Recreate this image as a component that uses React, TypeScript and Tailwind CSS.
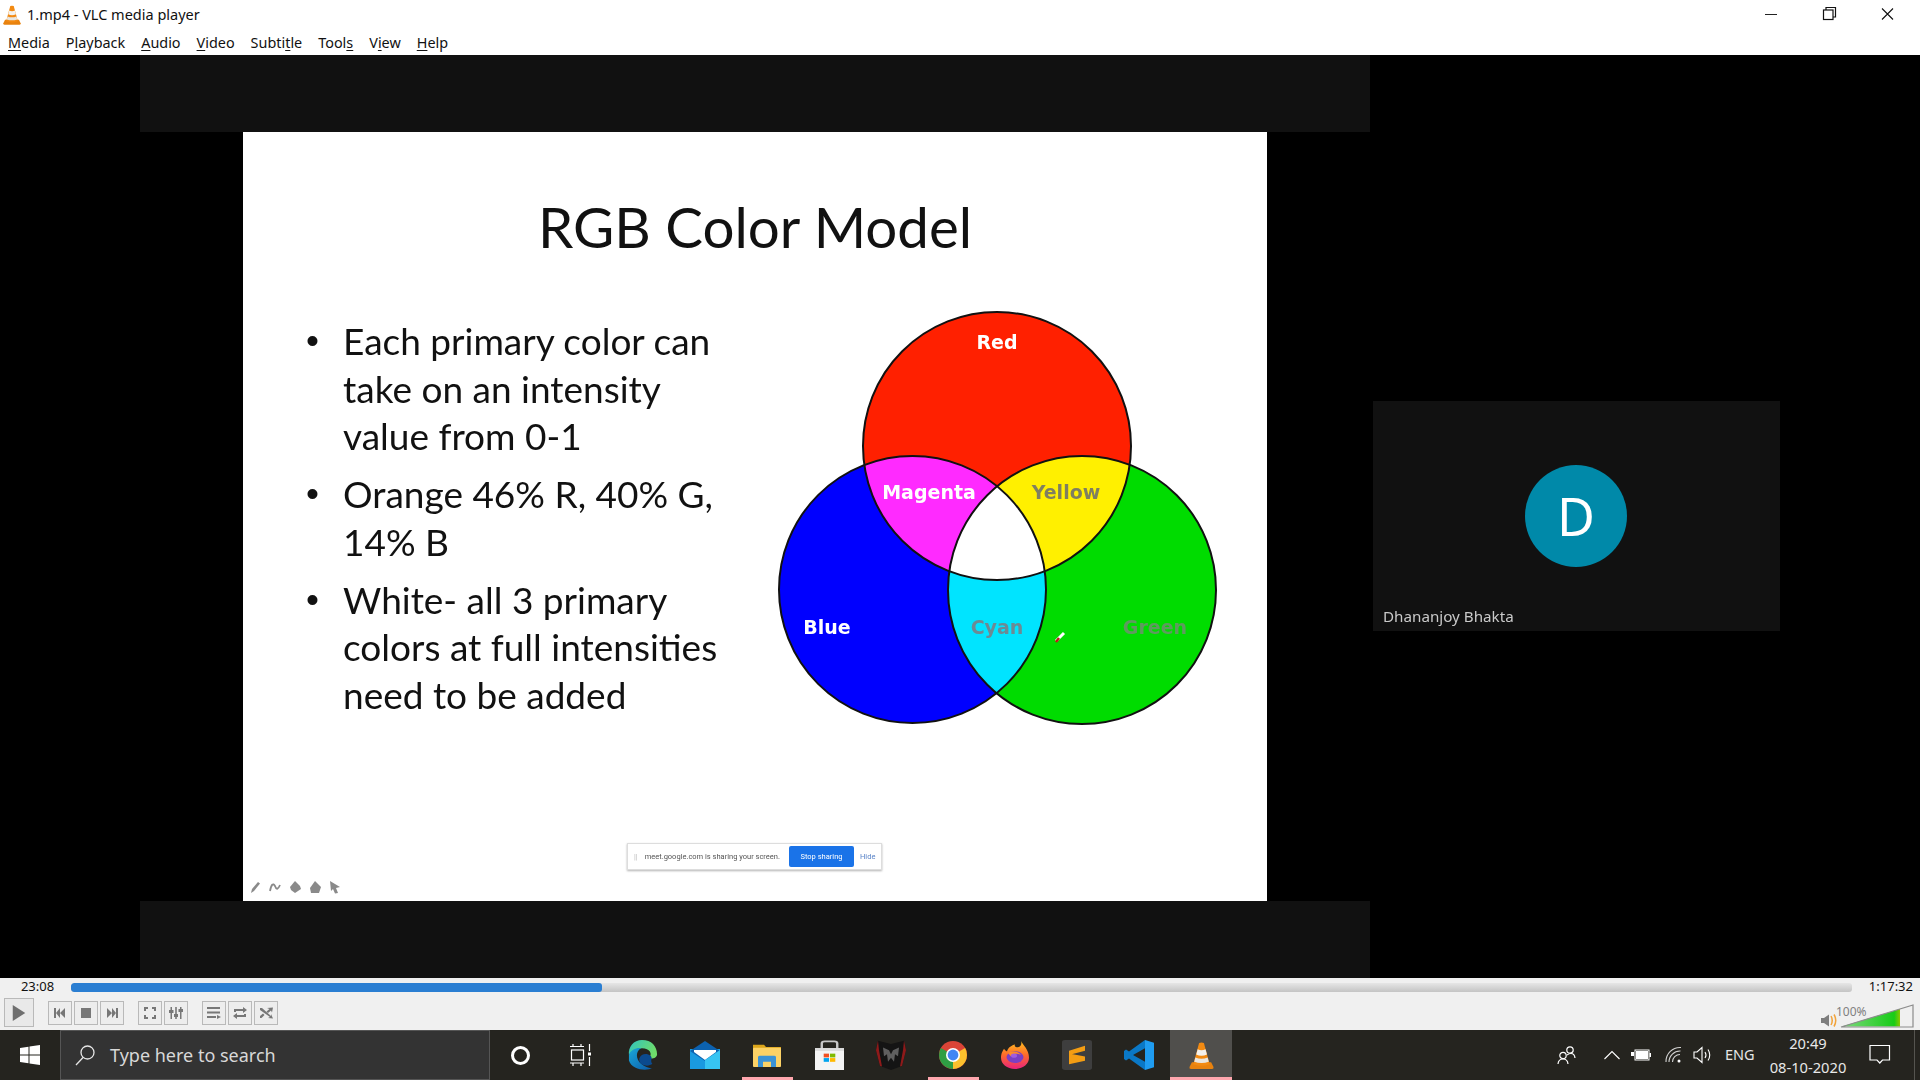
import React from "react";

const Vlc = ({ className }: { className?: string }) => (
  <svg viewBox="0 0 26 28" className={className}>
    <path d="M3 21 L0.5 26 Q0 28 2 28 H24 Q26 28 25.500 26 L23 21 Z" fill="#e8820e" />
    <path d="M10.500 1 Q13 0 15.500 1 L21.500 23 Q13 26.500 4.500 23 Z" fill="#f28a12" />
    <path d="M9 7.500 Q13 9.500 17.200 7.500 L18.700 13 Q13 15.500 7.500 13 Z" fill="#f4f1ec" />
    <path d="M6.600 16 Q13 18.500 19.400 16 L20.600 20.500 Q13 23 5.400 20.500 Z" fill="#e9e6e0" />
  </svg>
);

const Ctl = ({ children, className = "" }: { children: React.ReactNode; className?: string }) => (
  <div className={`w-6 h-6 border border-[#b9b9b9] bg-[#ededed] flex items-center justify-center shrink-0 ${className}`}>
    <svg viewBox="0 0 18 18" className="w-[18px] h-[18px]" fill="#777777" stroke="#777777" strokeWidth="0">
      {children}
    </svg>
  </div>
);

const Menu = ({ pre, u, post }: { pre: string; u: string; post: string }) => (
  <span>
    {pre}
    <span className="underline underline-offset-2">{u}</span>
    {post}
  </span>
);

const TaskBtn = ({ children, mark, active }: { children: React.ReactNode; mark?: boolean; active?: boolean }) => (
  <div className={`relative w-[62px] h-full flex items-center justify-center shrink-0 ${active ? "bg-[#504f4c]" : ""}`}>
    {children}
    {mark && <div className={`absolute bottom-0 h-[3px] bg-[#ffa7ae] ${active ? "left-0 right-0" : "left-[6px] right-[5px]"}`} />}
  </div>
);

const Venn = () => (
  <svg viewBox="775 305 450 425" className="w-[450px] h-[425px] shrink-0">
    <defs>
      <clipPath id="cr"><circle cx="997" cy="446" r="134" /></clipPath>
      <clipPath id="cb"><circle cx="912.500" cy="589.500" r="133.500" /></clipPath>
      <clipPath id="cg"><circle cx="1082" cy="590" r="134" /></clipPath>
    </defs>
    <circle cx="912.500" cy="589.500" r="133.500" fill="#0000ff" />
    <circle cx="1082" cy="590" r="134" fill="#00dc00" />
    <circle cx="997" cy="446" r="134" fill="#ff2000" />
    <g clipPath="url(#cr)"><circle cx="912.500" cy="589.500" r="133.500" fill="#ff2aff" /></g>
    <g clipPath="url(#cr)"><circle cx="1082" cy="590" r="134" fill="#fff000" /></g>
    <g clipPath="url(#cb)"><circle cx="1082" cy="590" r="134" fill="#00e4ff" /></g>
    <g clipPath="url(#cb)"><g clipPath="url(#cr)"><circle cx="1082" cy="590" r="134" fill="#ffffff" /></g></g>
    <g fill="none" stroke="#111111" strokeWidth="2">
      <circle cx="912.500" cy="589.500" r="133.500" />
      <circle cx="1082" cy="590" r="134" />
      <circle cx="997" cy="446" r="134" />
    </g>
    <g fontFamily="'DejaVu Sans', sans-serif" fontWeight="700" fontSize="19" textAnchor="middle">
      <text x="997" y="349" fill="#ffffff">Red</text>
      <text x="929" y="499" fill="#ffffff">Magenta</text>
      <text x="1066" y="499" fill="#7f7f60">Yellow</text>
      <text x="827" y="634" fill="#ffffff">Blue</text>
      <text x="997" y="634" fill="#6d8a94">Cyan</text>
      <text x="1155" y="634" fill="#5f9a5f">Green</text>
    </g>
    <path d="M1056 641 L1064 633" stroke="#ffffff" strokeWidth="3" />
    <path d="M1056 642 L1059 638" stroke="#c01818" strokeWidth="2.500" />
  </svg>
);

const Bullet = ({ lines, mt }: { lines: string[]; mt?: boolean }) => (
  <div className={`flex ${mt ? "mt-[10px]" : ""}`}>
    <span className="w-[37px] shrink-0 [font-family:'Liberation_Sans',sans-serif]">•</span>
    <div>
      {lines.map((l) => (
        <div key={l} className="whitespace-nowrap">{l}</div>
      ))}
    </div>
  </div>
);

export default function App() {
  return (
    <div className="w-[1920px] h-[1080px] flex flex-col overflow-hidden bg-black [font-family:'Open_Sans',sans-serif]">
      {/* title bar */}
      <div className="h-[30px] bg-white flex items-center shrink-0 relative">
        <Vlc className="w-[18px] h-[20px] ml-[3px]" />
        <span className="ml-[6px] text-[14.500px] text-[#111] whitespace-nowrap [font-family:'Noto_Sans',sans-serif]">1.mp4 - VLC media player</span>
        <div className="ml-auto flex items-center">
          <svg viewBox="0 0 58 30" className="w-[58px] h-[30px]"><path d="M22 14.500 H34" stroke="#222" strokeWidth="1" /></svg>
          <svg viewBox="0 0 58 30" className="w-[58px] h-[30px]" fill="none" stroke="#111" strokeWidth="1.200">
            <rect x="22.500" y="10" width="9.500" height="9.500" />
            <path d="M25 10 V7.500 H34.500 V17 H32" />
          </svg>
          <svg viewBox="0 0 58 30" className="w-[58px] h-[30px] mr-[3px]" stroke="#111" strokeWidth="1.100"><path d="M23 8.500 L34 19.500 M34 8.500 L23 19.500" /></svg>
        </div>
      </div>
      {/* menu */}
      <div className="h-[25px] bg-white flex items-center gap-4 pl-2 pt-[1px] text-[14.400px] text-[#111] shrink-0 [font-family:'Noto_Sans',sans-serif]">
        <Menu pre="" u="M" post="edia" />
        <Menu pre="P" u="l" post="ayback" />
        <Menu pre="" u="A" post="udio" />
        <Menu pre="" u="V" post="ideo" />
        <Menu pre="Subti" u="t" post="le" />
        <Menu pre="Tool" u="s" post="" />
        <Menu pre="V" u="i" post="ew" />
        <Menu pre="" u="H" post="elp" />
      </div>
      {/* video */}
      <div className="flex-1 min-h-0 flex bg-black">
        <div className="w-[140px] shrink-0" />
        <div className="w-[1230px] shrink-0 flex flex-col">
          <div className="h-[77px] bg-[#111111] shrink-0" />
          <div className="flex-1 min-h-0 flex justify-center">
            <div className="relative w-[1024px] bg-white flex flex-col text-black [font-family:'Lato',sans-serif]">
              <div className="h-[173px] flex items-center justify-center text-[56.500px] pt-[15px] text-[#111] shrink-0 blur-[0.4px]">RGB Color Model</div>
              <div className="flex">
                <div className="w-[532px] pl-[63px] shrink-0 text-[37px] leading-[47.700px] text-[#111] pt-[12px] blur-[0.4px]">
                  <Bullet lines={["Each primary color can", "take on an intensity", "value from 0-1"]} />
                  <Bullet mt lines={["Orange 46% R, 40% G,", "14% B"]} />
                  <Bullet mt lines={["White- all 3 primary", "colors at full intensities", "need to be added"]} />
                </div>
                <div className="blur-[0.4px] shrink-0"><Venn /></div>
              </div>
              {/* share bar floats over the slide */}
              <div className="absolute left-[384px] top-[711px] w-[255px] h-[27px] bg-white border border-[#dddddd] shadow-[0_1px_2px_rgba(0,0,0,0.3)] flex items-center text-[7.500px] text-[#555] blur-[0.4px] [font-family:'Roboto',sans-serif]">
                <span className="ml-[6px] text-[#bbb]">||</span>
                <span className="ml-[7px] whitespace-nowrap">meet.google.com is sharing your screen.</span>
                <div className="absolute left-[161px] top-[2px] w-[65px] h-[21px] bg-[#1a73e8] rounded-[2px] text-white flex items-center justify-center">Stop sharing</div>
                <span className="absolute left-[232px] text-[#5a84c8]">Hide</span>
              </div>
              {/* presenter toolbar */}
              <svg viewBox="0 0 92 14" className="absolute left-[7px] top-[748px] w-[92px] h-[14px] blur-[0.4px]" fill="#8a8a8a">
                <path d="M1 13 L2 9 L8 2 L10 3.500 L4 11 Z" />
                <path d="M20 11 Q22 1 25 6 Q27 12 30 5" fill="none" stroke="#8a8a8a" strokeWidth="1.800" />
                <path d="M40 7 L45 1 L50 6 L51 9 L45 13 L41 10 Z" />
                <path d="M60 8 L65 1 L71 7 L69 13 H61 Z" />
                <path d="M80 1 L90 7 L86 8 L88 13 L85 13.500 L83 9 L81 11 Z" />
              </svg>
            </div>
          </div>
          <div className="h-[77px] bg-[#111111] shrink-0" />
        </div>
        <div className="flex-1 flex items-center pl-[3px] pb-[1px]">
          <div className="relative w-[407px] h-[230px] bg-[#111111] blur-[0.3px]">
            <div className="absolute left-[152px] top-[64px] w-[102px] h-[102px] rounded-full bg-[#0089a9] flex items-center justify-center text-white text-[52px] [font-family:'Noto_Sans',sans-serif]">D</div>
            <div className="absolute left-[10px] top-[203px] text-[15.200px] leading-[24px] text-[#c9c9c9] whitespace-nowrap [font-family:'Noto_Sans',sans-serif]">Dhananjoy Bhakta</div>
          </div>
        </div>
      </div>
      {/* controls */}
      <div className="h-[52px] bg-[#f0f0f0] shrink-0 flex flex-col">
        <div className="h-[18px] flex items-center">
          <span className="w-[71px] pl-[4px] text-center text-[13px] text-[#111] [font-family:'Noto_Sans',sans-serif]">23:08</span>
          <div className="w-[1781px] h-[9px] rounded-[3px] bg-gradient-to-b from-[#e6e6e6] to-[#c4c4c4] overflow-hidden">
            <div className="w-[531px] h-full rounded-[3px] bg-[#2a7ed2]" />
          </div>
          <span className="ml-auto mr-[7px] text-[13px] text-[#111] [font-family:'Noto_Sans',sans-serif]">1:17:32</span>
        </div>
        <div className="flex-1 flex items-center pl-1 pb-[1px]">
          <div className="w-[30px] h-[29px] border border-[#b9b9b9] bg-[#e9e9e9] flex items-center justify-center shrink-0">
            <svg viewBox="0 0 18 20" className="w-[16px] h-[20px]"><path d="M2 1 L16 10 L2 19 Z" fill="#6f6f6f" /></svg>
          </div>
          <div className="ml-[14px] flex gap-[2px]">
            <Ctl><path d="M3 4 H5 V14 H3 Z M9 4 V14 L5 9 Z M14 4 V14 L9 9 Z" /></Ctl>
            <Ctl><rect x="4" y="4" width="10" height="10" /></Ctl>
            <Ctl><path d="M15 4 H13 V14 H15 Z M9 4 V14 L13 9 Z M4 4 V14 L9 9 Z" /></Ctl>
          </div>
          <div className="ml-[14px] flex gap-[2px]">
            <Ctl><path d="M3 3 H7 V5 H5 V7 H3 Z M11 3 H15 V7 H13 V5 H11 Z M3 11 H5 V13 H7 V15 H3 Z M13 11 H15 V15 H11 V13 H13 Z" /></Ctl>
            <Ctl><path d="M3.500 3 H5 V6 H6.500 V9 H5 V15 H3.500 V9 H2 V6 H3.500 Z M8.200 3 H9.800 V10 H11 V13 H9.800 V15 H8.200 V13 H7 V10 H8.200 Z M13 3 H14.500 V5 H16 V8 H14.500 V15 H13 V8 H11.500 V5 H13 Z" /></Ctl>
          </div>
          <div className="ml-[14px] flex gap-[2px]">
            <Ctl><path d="M2 3 H15 V5 H2 Z M2 7.500 H15 V9.500 H2 Z M2 12 H11 V14 H2 Z M12 11 L16 13 L12 15 Z" /></Ctl>
            <Ctl><path d="M3 8 V5 H12 V3 L16 6 L12 9 V7 H5 V8 Z M15 10 V13 H6 V15 L2 12 L6 9 V11 H13 V10 Z" /></Ctl>
            <Ctl><path d="M3 4 L5 4 L14 12 V10 L16 14.500 L11 14 L13 13 L3 6 Z M10 4 L16 3.500 L15 8.500 L14 6.500 L11 9 L9.500 7.500 L12.500 5 Z M3 12 L6 9.500 L7.500 11 L4.500 14 L3 14 Z" /></Ctl>
          </div>
          <div className="ml-auto relative w-[100px] h-full shrink-0">
            <svg viewBox="0 0 100 33" className="absolute inset-0 w-[100px] h-[33px]">
              <defs>
                <linearGradient id="vol" x1="0" x2="1">
                  <stop offset="0" stopColor="#7fd87f" />
                  <stop offset="0.900" stopColor="#18cc18" />
                  <stop offset="1" stopColor="#8ac800" />
                </linearGradient>
              </defs>
              <path d="M1 22 H4 L9 18.500 V30.500 L4 27 H1 Z" fill="#7d7d7d" />
              <path d="M11 20 Q13.500 24.500 11 29 M14 18.500 Q17.500 24.500 14 30.500" fill="none" stroke="#f2a33a" strokeWidth="1.500" />
              <path d="M21.500 30.500 L80 30.500 L80 13 Z" fill="url(#vol)" />
              <path d="M21 31 L93 9 V31 Z" fill="none" stroke="#8c8c8c" strokeWidth="1.200" />
            </svg>
            <span className="absolute left-[16px] top-[8px] text-[12px] leading-[16px] text-[#808080] [font-family:'Noto_Sans',sans-serif]">100%</span>
          </div>
        </div>
      </div>
      {/* taskbar */}
      <div className="h-[50px] bg-[#25241f] shrink-0 flex items-center text-white">
        <div className="w-[60px] h-full flex items-center justify-center shrink-0">
          <svg viewBox="0 0 20 20" className="w-[20px] h-[20px]" fill="#ffffff">
            <path d="M0 3 L8.500 1.800 V9.500 H0 Z M9.500 1.600 L20 0 V9.500 H9.500 Z M0 10.500 H8.500 V18.200 L0 17 Z M9.500 10.500 H20 V20 L9.500 18.400 Z" />
          </svg>
        </div>
        <div className="w-[430px] h-full bg-[#333333] border-y border-[#555555] border-x flex items-center shrink-0">
          <svg viewBox="0 0 24 24" className="w-[24px] h-[24px] ml-[12px]" fill="none" stroke="#e6e6e6" strokeWidth="1.300">
            <circle cx="14.500" cy="9.500" r="6.500" />
            <path d="M10 14.500 L3 22" />
          </svg>
          <span className="ml-[13px] text-[18px] text-[#d8d8d8] whitespace-nowrap [font-family:'Noto_Sans',sans-serif]">Type here to search</span>
        </div>
        <div className="w-[61px] h-full flex items-center justify-center shrink-0">
          <div className="w-[19px] h-[19px] rounded-full border-[3px] border-white" />
        </div>
        <div className="w-[59px] h-full flex items-center justify-center shrink-0">
          <svg viewBox="0 0 24 24" className="w-[24px] h-[24px]" fill="none" stroke="#ffffff" strokeWidth="1.200">
            <path d="M1 3.500 H15 M4 3.500 V1 M12 3.500 V1" />
            <rect x="2.500" y="7" width="12" height="10" />
            <path d="M1 20 H15 M4 20 V23 M12 20 V23 M20.500 1 V8 M20.500 14 V23" />
            <rect x="19" y="9.500" width="3" height="3" fill="#ffffff" stroke="none" />
          </svg>
        </div>
        <div className="w-[2px] shrink-0" />
        <TaskBtn>
          <svg viewBox="0 0 32 44" preserveAspectRatio="none" className="w-[30px] h-[30px]">
            <defs>
              <linearGradient id="e1" x1="0" y1="0" x2="1" y2="1">
                <stop offset="0" stopColor="#1aa7d8" />
                <stop offset="1" stopColor="#0c5ba8" />
              </linearGradient>
              <linearGradient id="e2" x1="0" y1="0" x2="1" y2="0.400">
                <stop offset="0" stopColor="#2fc4c0" />
                <stop offset="1" stopColor="#6fdc6a" />
              </linearGradient>
            </defs>
            <path d="M15 0 C25 0 31 9 31 21 C31 26 27 28 22 27 C27 20 23 12 15 12 C9 12 4 16 1 22 C0 10 6 0 15 0 Z" fill="url(#e2)" />
            <path d="M1 22 C3 14 9 11 14 12 C8 16 8 28 14 35 C19 41 24 42 26 41 C20 46 4 44 1 30 Z" fill="url(#e1)" />
            <path d="M12 27 C14 20 20 19 24 23 C27 27 23 30 26 35 C22 40 11 38 12 27 Z" fill="#0b4a8e" />
          </svg>
        </TaskBtn>
        <TaskBtn>
          <svg viewBox="0 0 30 28" className="w-[30px] h-[28px]">
            <rect x="0" y="8" width="30" height="20" fill="#1a9ae0" />
            <path d="M0 10 L15 0 L30 10 L15 20 Z" fill="#0c62b0" />
            <path d="M4 9 H26 V11 L15 19 L4 11 Z" fill="#ffffff" />
            <path d="M15 19 L30 9 V28 H15 Z" fill="#37c4f2" />
          </svg>
        </TaskBtn>
        <TaskBtn mark>
          <svg viewBox="0 0 28 31" preserveAspectRatio="none" className="w-[28px] h-[23px]">
            <path d="M0 1 H11 L13 4 H28 V10 H0 Z" fill="#dca51a" />
            <rect x="0" y="5" width="28" height="26" rx="1" fill="#fcd266" />
            <path d="M5 31 V18 Q5 16 7 16 H21 Q23 16 23 18 V31 H18 V24 H10 V31 Z" fill="#3b93d6" />
          </svg>
        </TaskBtn>
        <TaskBtn>
          <svg viewBox="0 0 30 44" preserveAspectRatio="none" className="w-[29px] h-[30px]">
            <path d="M7 13 V5 Q7 2 10 2 H20 Q23 2 23 5 V13" fill="none" stroke="#c8c8c8" strokeWidth="2.500" />
            <path d="M0 12 H30 V44 H0 Z" fill="#f4f4f4" />
            <rect x="0" y="12" width="30" height="4" fill="#dcdcdc" />
            <rect x="9" y="20" width="5.500" height="5.500" fill="#f25022" />
            <rect x="15.500" y="20" width="5.500" height="5.500" fill="#7fba00" />
            <rect x="9" y="26.500" width="5.500" height="5.500" fill="#00a4ef" />
            <rect x="15.500" y="26.500" width="5.500" height="5.500" fill="#ffb900" />
          </svg>
        </TaskBtn>
        <TaskBtn>
          <svg viewBox="0 0 30 44" preserveAspectRatio="none" className="w-[30px] h-[30px]">
            <path d="M2 1 L15 6 L28 1 L30 15 L26 38 L15 44 L4 38 L0 15 Z" fill="#141414" />
            <path d="M2 1 L0 15 L4 38 L6 39 L3 15 Z M28 1 L30 15 L26 38 L24 39 L27 15 Z" fill="#8e1a1a" />
            <path d="M7 11 L13 15 L15 21 L17 15 L23 11 L22 24 L19 21 L18 32 L15 26 L12 32 L11 21 L8 24 Z" fill="#5f5f5f" />
          </svg>
        </TaskBtn>
        <TaskBtn mark>
          <svg viewBox="0 0 28 28" className="w-[28px] h-[28px]">
            <circle cx="14" cy="14" r="14" fill="#db4437" />
            <path d="M14 14 L26.100 7 A14 14 0 0 1 14 28 Z" fill="#fbc02d" />
            <path d="M14 14 L14 28 A14 14 0 0 1 1.900 7 Z" fill="#2f9e44" />
            <circle cx="14" cy="14" r="7" fill="#ffffff" />
            <circle cx="14" cy="14" r="5.400" fill="#4285f4" />
          </svg>
        </TaskBtn>
        <TaskBtn>
          <svg viewBox="0 0 28 40" preserveAspectRatio="none" className="w-[28px] h-[28px]">
            <defs>
              <linearGradient id="ff" x1="0.500" y1="0" x2="0.500" y2="1">
                <stop offset="0" stopColor="#ffc01e" />
                <stop offset="0.500" stopColor="#ff6a2a" />
                <stop offset="1" stopColor="#e8227e" />
              </linearGradient>
            </defs>
            <path d="M20 0 C22 6 28 12 28 24 C28 33 22 40 14 40 C6 40 0 33 0 24 C0 17 2 14 3 11 C4 13 5 14 6 15 C7 9 11 6 14 5 C13 8 15 9 17 9 C20 8 21 4 20 0 Z" fill="url(#ff)" />
            <circle cx="14" cy="23" r="8.500" fill="#7b3fc4" />
            <path d="M7 17 C12 13 18 15 20 20 C16 17 11 18 10 22 Z" fill="#ff8a2a" />
            <circle cx="13" cy="21" r="3" fill="#a05ce0" />
          </svg>
        </TaskBtn>
        <TaskBtn>
          <svg viewBox="0 0 30 42" preserveAspectRatio="none" className="w-[30px] h-[30px]">
            <rect x="0" y="0" width="30" height="42" rx="3" fill="#3e3e3e" />
            <path d="M23 8 V15 L7 21 V15 Z M7 19 L23 23 V29 L7 34 V27 L7 19 Z" fill="#f49d13" />
          </svg>
        </TaskBtn>
        <TaskBtn>
          <svg viewBox="0 0 30 44" preserveAspectRatio="none" className="w-[30px] h-[30px]">
            <path d="M21 0 L30 4 V40 L21 44 L21 0 Z" fill="#1f9cf0" />
            <path d="M21 0 V12 L9 22 L21 32 V44 L5 27 L2 30 L0 28 V16 L2 14 L5 17 Z" fill="#0a78c6" />
          </svg>
        </TaskBtn>
        <TaskBtn mark active>
          <Vlc className="w-[25px] h-[27px]" />
        </TaskBtn>
        {/* tray */}
        <div className="flex-1 h-full flex items-center relative">
          <svg viewBox="0 0 20 20" className="absolute left-[325px] top-[15px] w-[20px] h-[20px]" fill="none" stroke="#ffffff" strokeWidth="1.200">
            <circle cx="13" cy="5" r="3.200" /><circle cx="6" cy="10.500" r="3.200" />
            <path d="M1 19 Q1.500 14 6 14 Q10.500 14 11 19 M10 10 Q12 8.500 14 8.500 Q17.500 8.500 18 13" />
          </svg>
          <svg viewBox="0 0 16 10" className="absolute left-[372px] top-[20px] w-[16px] h-[10px]" fill="none" stroke="#ffffff" strokeWidth="1.100"><path d="M0.500 9 L8 1.500 L15.500 9" /></svg>
          <svg viewBox="0 0 20 12" className="absolute left-[399px] top-[19px] w-[20px] h-[12px]" fill="#ffffff">
            <rect x="4" y="1" width="14" height="10" fill="none" stroke="#ffffff" /><rect x="5" y="2" width="12" height="8" /><rect x="18.500" y="4" width="1.500" height="4" /><path d="M0 3 H3 V7 H0 Z" />
          </svg>
          <svg viewBox="0 0 18 18" className="absolute left-[433px] top-[16px] w-[18px] h-[18px]" fill="none" stroke="#ffffff" strokeWidth="1.100">
            <path d="M1 16 A14 14 0 0 1 16 1.500 M4 16 A11 11 0 0 1 15.500 5 M7.500 16 A7.500 7.500 0 0 1 15 8.500" opacity="0.800" /><circle cx="14" cy="15" r="1.500" fill="#ffffff" stroke="none" />
          </svg>
          <svg viewBox="0 0 20 18" className="absolute left-[461px] top-[16px] w-[20px] h-[18px]" fill="none" stroke="#ffffff" strokeWidth="1.100">
            <path d="M1 6 H4 L9 1.500 V16.500 L4 12 H1 Z M12 6 Q14 9 12 12 M15 3.500 Q18.500 9 15 14.500" />
          </svg>
          <span className="absolute left-[493px] top-[14px] text-[14.500px] leading-[20px] text-[#e6e6e6] [font-family:'Noto_Sans',sans-serif]">ENG</span>
          <div className="absolute left-[531px] w-[90px] top-[1px] text-center text-[14.700px] leading-[24px] text-[#e8e8e8] whitespace-nowrap [font-family:'Noto_Sans',sans-serif]">
            <div>20:49</div>
            <div>08-10-2020</div>
          </div>
          <svg viewBox="0 0 22 22" className="absolute left-[637px] top-[14px] w-[22px] h-[22px]" fill="none" stroke="#ffffff" strokeWidth="1.200">
            <path d="M1 1.500 H20.500 V16 H13.500 L10.800 19 L8 16 H1 Z" />
          </svg>
          <div className="absolute right-[5px] top-0 bottom-0 w-px bg-[#55544f]" />
        </div>
      </div>
    </div>
  );
}
